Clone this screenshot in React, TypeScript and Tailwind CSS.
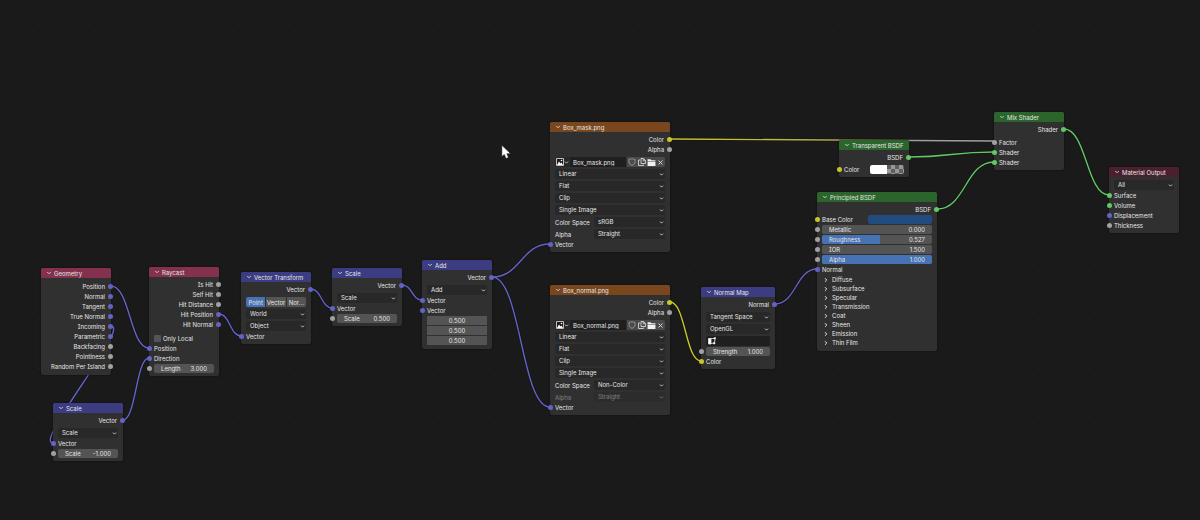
import { useId, useState } from 'react';
import type { ReactNode } from 'react';
import { clsx } from 'clsx';
import { ChevronDown, ChevronRight, X } from 'lucide-react';

type SocketKind = 'vector' | 'float' | 'color' | 'shader';
type HeaderKind = 'input' | 'vector' | 'texture' | 'shader' | 'output';

const socketColors: Record<SocketKind, string> = {
  vector: 'bg-[#6363c7]',
  float: 'bg-[#a1a1a1]',
  color: 'bg-[#c7c729]',
  shader: 'bg-[#63c763]',
};

const headerColors: Record<HeaderKind, string> = {
  input: 'bg-[#83314f]',
  vector: 'bg-[#3c3c83]',
  texture: 'bg-[#79461d]',
  shader: 'bg-[#2b652b]',
  output: 'bg-[#4a1f2e]',
};

interface Link {
  from: [number, number];
  to: [number, number];
  stroke: string;
  bend?: number;
}

const links: Link[] = [
  { from: [111, 286], to: [149, 348], stroke: '#6363c7' },
  { from: [111, 326], to: [53, 443], stroke: '#6363c7', bend: 20 },
  { from: [123, 420], to: [149, 358], stroke: '#6363c7' },
  { from: [219, 314], to: [241, 336], stroke: '#6363c7' },
  { from: [311, 289], to: [332, 308], stroke: '#6363c7' },
  { from: [402, 285], to: [422, 300], stroke: '#6363c7' },
  { from: [492, 277], to: [550, 244], stroke: '#6363c7' },
  { from: [492, 277], to: [550, 407], stroke: '#6363c7' },
  { from: [670, 302], to: [701, 361], stroke: '#c7c729' },
  { from: [670, 139], to: [994, 141], stroke: 'url(#mask-link)' },
  { from: [775, 304], to: [817, 269], stroke: '#6363c7' },
  { from: [909, 157], to: [994, 152], stroke: '#63c763' },
  { from: [937, 209], to: [994, 162], stroke: '#63c763' },
  { from: [1064, 129], to: [1109, 195], stroke: '#63c763' },
];

function linkPath({ from, to, bend }: Link) {
  const d = bend ?? (to[0] - from[0]) / 2;
  return `M${from[0]} ${from[1]} C${from[0] + d} ${from[1]} ${to[0] - d} ${to[1]} ${to[0]} ${to[1]}`;
}

function Links() {
  return (
    <svg className="pointer-events-none absolute inset-0 h-full w-full" fill="none" aria-hidden="true">
      <defs>
        <linearGradient id="mask-link" gradientUnits="userSpaceOnUse" x1="670" y1="138" x2="994" y2="142">
          <stop offset="0" stopColor="#c7c729" />
          <stop offset="0.3" stopColor="#c0ba35" />
          <stop offset="0.5" stopColor="#b0a350" />
          <stop offset="0.72" stopColor="#a3a199" />
          <stop offset="1" stopColor="#a1a1a1" />
        </linearGradient>
      </defs>
      {links.map((link, i) => (
        <path key={i} d={linkPath(link)} stroke="#111111" strokeWidth="2.6" />
      ))}
      {links.map((link, i) => (
        <path key={i} d={linkPath(link)} stroke={link.stroke} strokeWidth="1.4" />
      ))}
    </svg>
  );
}

interface NodeProps {
  title: string;
  kind: HeaderKind;
  className: string;
  children: ReactNode;
}

function Node({ title, kind, className, children }: NodeProps) {
  return (
    <section className={clsx('absolute rounded-[2px] bg-[#303030] shadow-[0_0_2px_#0c0c0c]', className)}>
      <header className={clsx('flex h-[10px] items-center gap-[2px] rounded-t-[2px] pl-[5px]', headerColors[kind])}>
        <ChevronDown className="size-[6px] text-[#cccccc]" strokeWidth={4} />
        <h2>{title}</h2>
      </header>
      <div className="flex flex-col px-[5px] pt-[2px] pb-[3px]">{children}</div>
    </section>
  );
}

function Socket({ kind, side }: { kind: SocketKind; side: 'left' | 'right' }) {
  return (
    <span
      className={clsx(
        'absolute top-[3px] size-[5px] rounded-full',
        side === 'left' ? '-left-[7px]' : '-right-[7px]',
        socketColors[kind]
      )}
    />
  );
}

function Output({ label, kind }: { label: string; kind: SocketKind }) {
  return (
    <div className="relative flex h-[10px] items-center justify-end pr-px">
      {label}
      <Socket kind={kind} side="right" />
    </div>
  );
}

function Input({ label, kind, children }: { label?: string; kind: SocketKind; children?: ReactNode }) {
  return (
    <div className="relative flex h-[10px] items-center justify-between">
      <Socket kind={kind} side="left" />
      {label && <span>{label}</span>}
      {children}
    </div>
  );
}

function Dropdown({ value, label, disabled }: { value: string; label: string; disabled?: boolean }) {
  return (
    <div className={clsx('relative h-[10px] flex-1 rounded-[2px] bg-[#282828]', disabled && 'opacity-40')}>
      <select
        aria-label={label}
        disabled={disabled}
        className="block h-[10px] w-full appearance-none rounded-[2px] bg-transparent pl-[4px] leading-[10px] opacity-100 outline-none"
      >
        <option>{value}</option>
      </select>
      <ChevronDown className="pointer-events-none absolute top-[3px] right-[1px] size-[5px]" strokeWidth={4} />
    </div>
  );
}

function MenuRow({ value, label }: { value: string; label: string }) {
  return (
    <div className="flex">
      <Dropdown value={value} label={label} />
    </div>
  );
}

function NumberField({ label, value, fill }: { label: string; value: string; fill?: number }) {
  const id = useId();
  return (
    <div className="relative flex h-[9px] w-full items-center justify-between overflow-hidden rounded-[2px] bg-[#545454] px-[7px]">
      {fill !== undefined && (
        <div className="absolute inset-y-0 left-0 bg-[#4772b3]" style={{ width: `${fill * 100}%` }} />
      )}
      <label htmlFor={id} className="relative">{label}</label>
      <input id={id} defaultValue={value} className="relative h-[9px] w-[24px] bg-transparent text-right outline-none" />
    </div>
  );
}

function ImageNode({ name, space, alphaDisabled, className }: {
  name: string;
  space: string;
  alphaDisabled?: boolean;
  className: string;
}) {
  return (
    <Node title={name} kind="texture" className={className}>
      <Output label="Color" kind="color" />
      <Output label="Alpha" kind="float" />
      <div className="mt-[3px] flex flex-col gap-[2px]">
        <div className="flex h-[10px] gap-[1px]">
          <button aria-label="Browse images" className="flex w-[14px] items-center rounded-l-[2px] bg-[#282828] pl-px">
            <svg viewBox="0 0 16 16" className="size-[8px]">
              <path d="M1 1h14v14H1z" fill="#1c1c1c" stroke="#e6e6e6" strokeWidth="1.6" />
              <path d="M2 14l4-7 3 4 2-2 3 5z" fill="#fff" />
              <circle cx="11" cy="5" r="1.6" fill="#fff" />
            </svg>
            <ChevronDown className="size-[5px]" strokeWidth={4} />
          </button>
          <input
            aria-label="Image name"
            defaultValue={name}
            className="h-[10px] min-w-0 flex-1 bg-[#1f1f1f] pl-[3px] outline-none"
          />
          <div className="flex items-center rounded-r-[2px] bg-[#4a4a4a]">
            <button aria-label="Fake user" className="flex w-[10px] justify-center">
              <svg viewBox="0 0 16 16" className="size-[8px]" fill="none" stroke="#a0a0a0" strokeWidth="1.6">
                <path d="M8 1.5c2 1 4 1.3 6 1.3v5c0 3.5-3 5.5-6 7-3-1.5-6-3.5-6-7v-5c2 0 4-.3 6-1.3z" />
              </svg>
            </button>
            <button aria-label="New image" className="flex w-[9px] justify-center">
              <svg viewBox="0 0 16 16" className="size-[8px]" fill="none" stroke="#e6e6e6" strokeWidth="1.6">
                <path d="M6 1h5l4 4v6H6zM10.5 1v4.5H15" />
                <path d="M4 4H1v11h10v-2" />
              </svg>
            </button>
            <button aria-label="Open image" className="flex w-[10px] justify-center">
              <svg viewBox="0 0 16 16" className="size-[9px]" fill="#f0f0f0">
                <path d="M1 2h5l2 2h7v2H1zM1 7h14v7H1z" />
              </svg>
            </button>
            <button aria-label="Unlink" className="flex w-[9px] justify-center">
              <X className="size-[7px]" strokeWidth={3} />
            </button>
          </div>
        </div>
        <MenuRow label="Interpolation" value="Linear" />
        <MenuRow label="Projection" value="Flat" />
        <MenuRow label="Extension" value="Clip" />
        <MenuRow label="Source" value="Single Image" />
        <div className="flex items-center">
          <span className="w-[39px]">Color Space</span>
          <Dropdown label="Color Space" value={space} />
        </div>
        <div className="flex items-center">
          <span className={clsx('w-[39px]', alphaDisabled && 'opacity-40')}>Alpha</span>
          <Dropdown label="Alpha" value="Straight" disabled={alphaDisabled} />
        </div>
      </div>
      <Input label="Vector" kind="vector" />
    </Node>
  );
}

function ScaleNode({ value, className }: { value: string; className: string }) {
  return (
    <Node title="Scale" kind="vector" className={className}>
      <Output label="Vector" kind="vector" />
      <div className="pt-[3px]">
        <MenuRow label="Operation" value="Scale" />
      </div>
      <Input label="Vector" kind="vector" />
      <Input kind="float">
        <NumberField label="Scale" value={value} />
      </Input>
    </Node>
  );
}

const spaces = ['Point', 'Vector', 'Nor...'];

function VectorTransformNode() {
  const [active, setActive] = useState('Point');

  return (
    <Node title="Vector Transform" kind="vector" className="top-[272px] left-[241px] w-[70px]">
      <Output label="Vector" kind="vector" />
      <div className="flex flex-col gap-[2px] pt-[3px]">
        <div className="flex h-[10px] gap-px overflow-hidden rounded-[2px]">
          {spaces.map(name => (
            <button
              key={name}
              onClick={() => setActive(name)}
              className={clsx('flex-1', active === name ? 'bg-[#4772b3]' : 'bg-[#545454]')}
            >
              {name}
            </button>
          ))}
        </div>
        <MenuRow label="Convert from" value="World" />
        <MenuRow label="Convert to" value="Object" />
      </div>
      <Input label="Vector" kind="vector" />
    </Node>
  );
}

const geometryOutputs: [string, SocketKind][] = [
  ['Position', 'vector'],
  ['Normal', 'vector'],
  ['Tangent', 'vector'],
  ['True Normal', 'vector'],
  ['Incoming', 'vector'],
  ['Parametric', 'vector'],
  ['Backfacing', 'float'],
  ['Pointiness', 'float'],
  ['Random Per Island', 'float'],
];

const raycastOutputs: [string, SocketKind][] = [
  ['Is Hit', 'float'],
  ['Self Hit', 'float'],
  ['Hit Distance', 'float'],
  ['Hit Position', 'vector'],
  ['Hit Normal', 'vector'],
];

const panels = ['Diffuse', 'Subsurface', 'Specular', 'Transmission', 'Coat', 'Sheen', 'Emission', 'Thin Film'];

export default function App() {
  return (
    <main className="relative min-h-screen w-full overflow-hidden bg-[#1a1a1a] bg-[radial-gradient(circle,#222222_1px,transparent_1px)] bg-[size:50px_49px] bg-[position:14px_1px] font-['Inter',sans-serif] text-[6px] leading-[9px] text-[#e6e6e6] [font-feature-settings:'cv08']">
      <Links />

      <Node title="Geometry" kind="input" className="top-[268px] left-[41px] w-[70px]">
        <div className="py-px">
          {geometryOutputs.map(([label, kind]) => (
            <Output key={label} label={label} kind={kind} />
          ))}
        </div>
      </Node>

      <Node title="Raycast" kind="input" className="top-[267px] left-[149px] w-[70px]">
        {raycastOutputs.map(([label, kind]) => (
          <Output key={label} label={label} kind={kind} />
        ))}
        <label className="mt-[4px] flex h-[10px] items-center gap-[2px]">
          <input type="checkbox" className="size-[7px] appearance-none rounded-[1px] bg-[#545454] checked:bg-[#4772b3]" />
          Only Local
        </label>
        <Input label="Position" kind="vector" />
        <Input label="Direction" kind="vector" />
        <Input kind="float">
          <NumberField label="Length" value="3.000" />
        </Input>
      </Node>

      <ScaleNode value="-1.000" className="top-[403px] left-[53px] w-[70px]" />
      <VectorTransformNode />
      <ScaleNode value="0.500" className="top-[268px] left-[332px] w-[70px]" />

      <Node title="Add" kind="vector" className="top-[260px] left-[422px] w-[70px]">
        <Output label="Vector" kind="vector" />
        <div className="pt-[3px]">
          <MenuRow label="Operation" value="Add" />
        </div>
        <Input label="Vector" kind="vector" />
        <Input label="Vector" kind="vector" />
        <div className="flex flex-col gap-px overflow-hidden rounded-[2px] pt-px pb-px">
          {['X', 'Y', 'Z'].map(axis => (
            <input
              key={axis}
              aria-label={axis}
              defaultValue="0.500"
              className="h-[9px] w-full bg-[#545454] text-center outline-none"
            />
          ))}
        </div>
      </Node>

      <ImageNode name="Box_mask.png" space="sRGB" className="top-[122px] left-[550px] w-[120px]" />
      <ImageNode name="Box_normal.png" space="Non-Color" alphaDisabled className="top-[285px] left-[550px] w-[120px]" />

      <Node title="Normal Map" kind="vector" className="top-[287px] left-[701px] w-[74px]">
        <Output label="Normal" kind="vector" />
        <div className="flex flex-col gap-[2px] pt-[3px]">
          <MenuRow label="Space" value="Tangent Space" />
          <MenuRow label="Convention" value="OpenGL" />
          <button aria-label="UV map" className="flex h-[10px] items-center rounded-[2px] bg-[#1f1f1f] pl-[2px]">
            <svg viewBox="0 0 16 16" className="size-[8px]" fill="none" stroke="#e6e6e6" strokeWidth="1.6">
              <path d="M1 3h5v11H1z" fill="#fff" />
              <path d="M5 3h9M14 3l-1 9M6 13l7-1" />
              <path d="M12 1h3v3h-3zM11 11h3v3h-3z" fill="#fff" strokeWidth="1" />
            </svg>
          </button>
        </div>
        <Input kind="float">
          <NumberField label="Strength" value="1.000" />
        </Input>
        <Input label="Color" kind="color" />
      </Node>

      <Node title="Principled BSDF" kind="shader" className="top-[192px] left-[817px] w-[120px]">
        <Output label="BSDF" kind="shader" />
        <Input label="Base Color" kind="color">
          <button aria-label="Base Color" className="h-[9px] w-[64px] rounded-[2px] bg-[#224c80]" />
        </Input>
        <Input kind="float">
          <NumberField label="Metallic" value="0.000" fill={0} />
        </Input>
        <Input kind="float">
          <NumberField label="Roughness" value="0.527" fill={0.527} />
        </Input>
        <Input kind="float">
          <NumberField label="IOR" value="1.500" />
        </Input>
        <Input kind="float">
          <NumberField label="Alpha" value="1.000" fill={1} />
        </Input>
        <Input label="Normal" kind="vector" />
        <div className="flex flex-col py-px">
          {panels.map(panel => (
            <button key={panel} className="flex h-[9px] items-center gap-[3px] pl-px text-left">
              <ChevronRight className="size-[6px]" strokeWidth={4} />
              {panel}
            </button>
          ))}
        </div>
      </Node>

      <Node title="Transparent BSDF" kind="shader" className="top-[140px] left-[839px] w-[70px]">
        <Output label="BSDF" kind="shader" />
        <div className="pt-[2px]">
          <Input label="Color" kind="color">
            <button aria-label="Color" className="flex h-[9px] w-[34px] overflow-hidden rounded-[2px]">
              <span className="h-full flex-1 bg-white" />
              <span className="h-full flex-1 bg-[repeating-conic-gradient(#989898_0_25%,#5f5f5f_0_50%)] bg-[size:8px_8px]" />
            </button>
          </Input>
        </div>
      </Node>

      <Node title="Mix Shader" kind="shader" className="top-[112px] left-[994px] w-[70px]">
        <Output label="Shader" kind="shader" />
        <div className="pt-[3px]">
          <Input label="Factor" kind="float" />
          <Input label="Shader" kind="shader" />
          <Input label="Shader" kind="shader" />
        </div>
      </Node>

      <Node title="Material Output" kind="output" className="top-[167px] left-[1109px] w-[70px]">
        <div className="pt-px">
          <MenuRow label="Target" value="All" />
        </div>
        <Input label="Surface" kind="shader" />
        <Input label="Volume" kind="shader" />
        <Input label="Displacement" kind="vector" />
        <Input label="Thickness" kind="float" />
      </Node>

      {/* Mouse pointer */}
      <svg viewBox="0 0 12 18" className="pointer-events-none absolute top-[144px] left-[501px] h-[16px] w-[10px]" aria-hidden="true">
        <path d="M1 1v13.5l3-2.5 2 4.8 3-1.3-2-4.5H11.5z" fill="#fff" stroke="#111" strokeWidth="0.6" />
      </svg>
    </main>
  );
}
